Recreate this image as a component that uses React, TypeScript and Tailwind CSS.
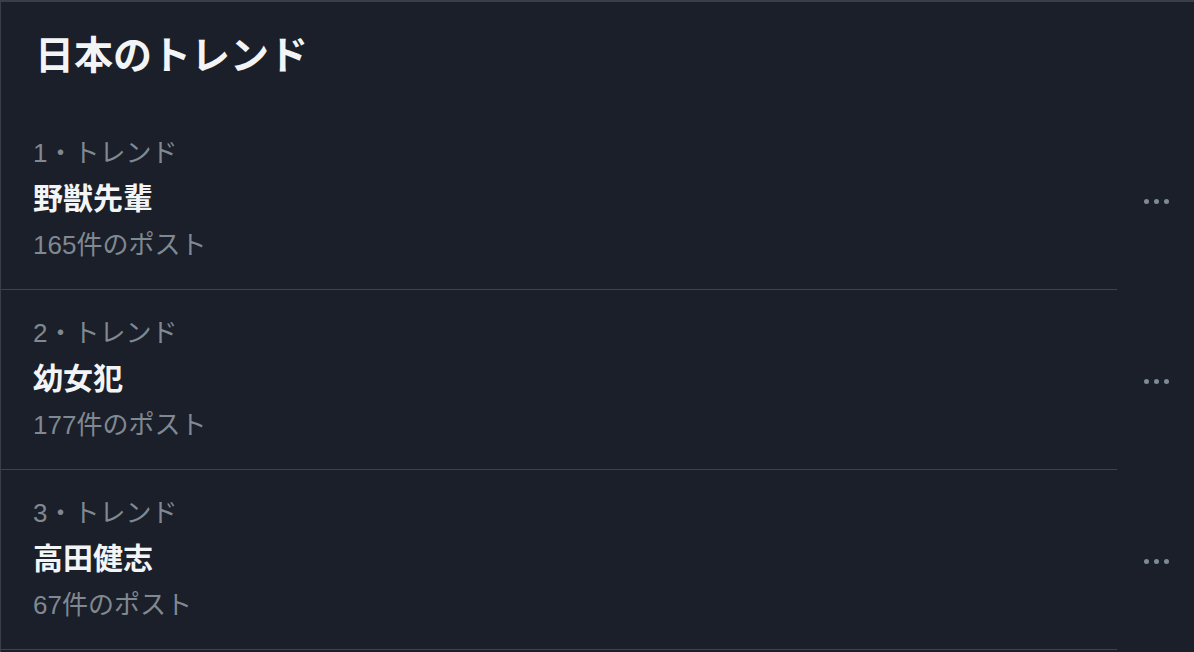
import React from "react";

const trends = [
  { rank: 1, name: "野獣先輩", count: "165件のポスト" },
  { rank: 2, name: "幼女犯", count: "177件のポスト" },
  { rank: 3, name: "高田健志", count: "67件のポスト" },
];

const font = {
  fontFamily: '"Liberation Sans", "Noto Sans CJK JP", sans-serif',
};

export default function App() {
  return (
    <div
      className="w-[1194px] h-[652px] overflow-hidden bg-[#1a1f29] border-t-2 border-l border-[#3a3f47]"
      style={font}
    >
      <div className="pl-[34px] pt-[31px] pb-[31px]">
        <h2 className="text-[39px] leading-[46px] font-bold text-[#f2f4f5]">日本のトレンド</h2>
      </div>
      {trends.map((t) => (
        <div key={t.rank} className="flex">
          <div className="w-[1116px] border-b border-[#3e444c] pl-[32px] pt-[20px] pb-[21px]">
            <div className="text-[26px] leading-[46px] text-[#808891]">{t.rank}・トレンド</div>
            <div className="text-[30px] leading-[46px] font-bold text-[#f2f4f5]">{t.name}</div>
            <div className="text-[26px] leading-[46px] text-[#808891]">{t.count}</div>
          </div>
          <div className="flex-1 pt-[68px] pl-[27px]">
            <div className="flex items-center gap-[5px] h-[46px]">
              <span className="w-[5px] h-[5px] rounded-full bg-[#7f8a96]" />
              <span className="w-[5px] h-[5px] rounded-full bg-[#7f8a96]" />
              <span className="w-[5px] h-[5px] rounded-full bg-[#7f8a96]" />
            </div>
          </div>
        </div>
      ))}
    </div>
  );
}
